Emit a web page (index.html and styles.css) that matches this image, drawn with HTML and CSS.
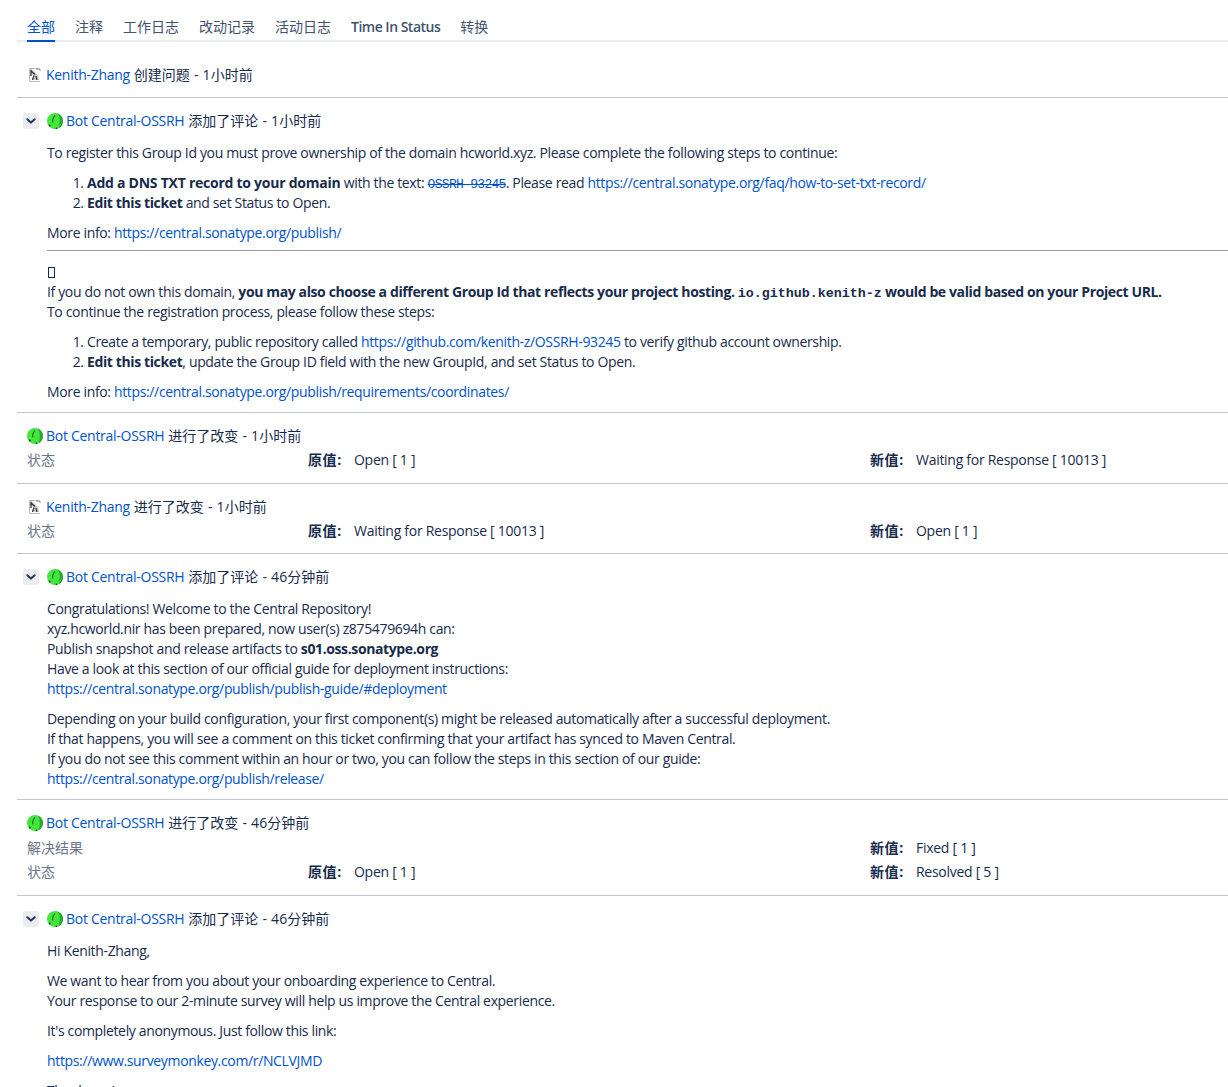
FILE: index.html
```
<!DOCTYPE html>
<html lang="zh">
<head>
<meta charset="utf-8">
<title>Activity</title>
<link rel="stylesheet" href="styles.css">
</head>
<body>
<svg class="defs" width="0" height="0" aria-hidden="true">
  <symbol id="bot" viewBox="0 0 16 16">
    <circle cx="8" cy="8" r="8" fill="#45e63c"/>
    <path d="M10.500 .4C13 3 13.600 9 11.600 15.200C14.500 13.900 16 11 16 8C16 4.500 13.800 1.500 10.500 .4Z" fill="#2aa834"/>
    <path d="M8 2.500C6 4.500 5.300 7 5.800 9.500" fill="none" stroke="#177a28" stroke-width="1.200"/>
    <circle cx="2.800" cy="12.600" r="1" fill="#14521c"/>
    <circle cx="9.500" cy="15.300" r=".9" fill="#14521c"/>
  </symbol>
  <symbol id="human" viewBox="0 0 12 14">
    <path d="M.5.5H10M.5.5V13.500H11" fill="none" stroke="#bdbdbd"/>
    <path d="M2 2H4L9 7L10 12H3L4.500 8L2 5Z" fill="#cfcfcf"/>
    <path d="M2 1.500V8M2 3L6 6.500M5 7.500L3.500 12M7 8L8 12" fill="none" stroke="#333" stroke-width="1.300"/>
    <path d="M7 1H11V3" fill="none" stroke="#8a8a8a"/>
  </symbol>
  <symbol id="chev" viewBox="0 0 16 16">
    <path d="M4.300 6.200L8 9.600L11.700 6.200" fill="none" stroke="#253858" stroke-width="2" stroke-linecap="round" stroke-linejoin="round"/>
  </symbol>
</svg>

<nav class="tabs">
  <a class="tab active">全部</a>
  <a class="tab">注释</a>
  <a class="tab">工作日志</a>
  <a class="tab">改动记录</a>
  <a class="tab">活动日志</a>
  <a class="tab strong">Time In Status</a>
  <a class="tab">转换</a>
</nav>

<section class="item first">
  <div class="head"><svg class="human"><use href="#human"/></svg><a>Kenith-Zhang</a><span class="cn">创建问题 - 1小时前</span></div>
</section>

<section class="item comment">
  <div class="head"><button class="toggle"><svg><use href="#chev"/></svg></button><svg class="bot"><use href="#bot"/></svg><a>Bot Central-OSSRH</a><span class="cn">添加了评论 - 1小时前</span></div>
  <div class="body">
    <p>To register this Group Id you must prove ownership of the domain hcworld.xyz. Please complete the following steps to continue:</p>
    <ol>
      <li><b class="dns">Add a DNS TXT record to your domain</b> with the text: <s class="mono">OSSRH-93245</s>. Please read <a>https://central.sonatype.org/faq/how-to-set-txt-record/</a></li>
      <li><b>Edit this ticket</b> and set Status to Open.</li>
    </ol>
    <p>More info: <a>https://central.sonatype.org/publish/</a></p>
    <hr>
    <p><span class="tofu"></span><br>If you do not own this domain, <b>you may also choose a different Group Id that reflects your project hosting. <code>io.github.kenith-z</code> would be valid based on your Project URL.</b><br>To continue the registration process, please follow these steps:</p>
    <ol>
      <li>Create a temporary, public repository called <a>https://github.com/kenith-z/OSSRH-93245</a> to verify github account ownership.</li>
      <li><b>Edit this ticket</b>, update the Group ID field with the new GroupId, and set Status to Open.</li>
    </ol>
    <p>More info: <a>https://central.sonatype.org/publish/requirements/coordinates/</a></p>
  </div>
</section>

<section class="item change">
  <div class="head"><svg class="bot"><use href="#bot"/></svg><a>Bot Central-OSSRH</a><span class="cn">进行了改变 - 1小时前</span></div>
  <div class="changes">
    <span class="field">状态</span><b>原值:</b><span>Open [ 1 ]</span><b>新值:</b><span>Waiting for Response [ 10013 ]</span>
  </div>
</section>

<section class="item change">
  <div class="head"><svg class="human"><use href="#human"/></svg><a>Kenith-Zhang</a><span class="cn">进行了改变 - 1小时前</span></div>
  <div class="changes">
    <span class="field">状态</span><b>原值:</b><span>Waiting for Response [ 10013 ]</span><b>新值:</b><span>Open [ 1 ]</span>
  </div>
</section>

<section class="item comment">
  <div class="head"><button class="toggle"><svg><use href="#chev"/></svg></button><svg class="bot"><use href="#bot"/></svg><a>Bot Central-OSSRH</a><span class="cn">添加了评论 - 46分钟前</span></div>
  <div class="body">
    <p>Congratulations! Welcome to the Central Repository!<br>xyz.hcworld.nir has been prepared, now user(s) z875479694h can:<br>Publish snapshot and release artifacts to <b>s01.oss.sonatype.org</b><br>Have a look at this section of our official guide for deployment instructions:<br><a>https://central.sonatype.org/publish/publish-guide/#deployment</a></p>
    <p>Depending on your build configuration, your first component(s) might be released automatically after a successful deployment.<br>If that happens, you will see a comment on this ticket confirming that your artifact has synced to Maven Central.<br>If you do not see this comment within an hour or two, you can follow the steps in this section of our guide:<br><a>https://central.sonatype.org/publish/release/</a></p>
  </div>
</section>

<section class="item change tall">
  <div class="head"><svg class="bot"><use href="#bot"/></svg><a>Bot Central-OSSRH</a><span class="cn">进行了改变 - 46分钟前</span></div>
  <div class="changes">
    <span class="field">解决结果</span><b class="skip">新值:</b><span>Fixed [ 1 ]</span>
    <span class="field">状态</span><b>原值:</b><span>Open [ 1 ]</span><b>新值:</b><span>Resolved [ 5 ]</span>
  </div>
</section>

<section class="item comment">
  <div class="head"><button class="toggle"><svg><use href="#chev"/></svg></button><svg class="bot"><use href="#bot"/></svg><a>Bot Central-OSSRH</a><span class="cn">添加了评论 - 46分钟前</span></div>
  <div class="body">
    <p>Hi Kenith-Zhang,</p>
    <p>We want to hear from you about your onboarding experience to Central.<br>Your response to our 2-minute survey will help us improve the Central experience.</p>
    <p>It's completely anonymous. Just follow this link:</p>
    <p><a>https://www.surveymonkey.com/r/NCLVJMD</a></p>
    <p>Thank you!</p>
  </div>
</section>
</body>
</html>
```
FILE: styles.css
```
html {
  height: 1087px;
  overflow: hidden;
}
body {
  margin: 0;
  padding: 0 0 0 17px;
  background: #fff;
  color: #172b4d;
  font: 14px/20px "Open Sans", "Noto Sans CJK SC", sans-serif;
  letter-spacing: -.28px;
}
.defs {
  position: absolute;
}
a {
  color: #0052cc;
}
.tabs {
  display: flex;
  gap: 20px;
  height: 26px;
  margin-top: 14px;
  padding-left: 10px;
  border-bottom: 2px solid #ebecf0;
}
.tab {
  height: 28px;
  box-sizing: border-box;
  color: #42526e;
  line-height: 26px;
  letter-spacing: 0;
}
.tab.strong {
  font-weight: 600;
  letter-spacing: -.5px;
}
.tab.active {
  color: #0052cc;
  border-bottom: 2px solid #0052cc;
}
.item {
  border-bottom: 1px solid #c1c7d0;
}
.head {
  display: flex;
  align-items: center;
  height: 20px;
  padding-left: 10px;
  white-space: pre;
}
.cn {
  margin-left: 4px;
  letter-spacing: 0;
  word-spacing: .5px;
}
.human {
  width: 12px;
  height: 14px;
  margin: 0 5px 0 2px;
}
.bot {
  width: 16px;
  height: 16px;
  margin-right: 3px;
}
.first {
  padding: 23px 0 12px;
}
.comment {
  padding: 13px 0 0;
}
.comment .head {
  padding-left: 6px;
}
.toggle {
  width: 16px;
  height: 16px;
  padding: 0;
  margin-right: 8px;
  border: 0;
  border-radius: 3px;
  background: #ebecf0;
}
.toggle svg {
  display: block;
  width: 16px;
  height: 16px;
}
.body {
  padding: 12px 0 0 30px;
  letter-spacing: -.35px;
}
.body b {
  letter-spacing: -.38px;
}
.body b.dns {
  letter-spacing: -.25px;
}
.body p {
  margin: 0 0 10px;
}
.body ol {
  margin: 0 0 10px;
  padding-left: 40px;
}
.body hr {
  height: 0;
  margin: -3px 0 11px;
  border: 0;
  border-top: 1px solid #999;
}
.mono {
  color: #0052cc;
  font: 13px/1 "Liberation Mono", monospace;
  letter-spacing: -.7px;
}
code {
  font: 700 13.33px/1 "Liberation Mono", monospace;
  letter-spacing: 0;
}
.tofu {
  display: inline-block;
  width: 5px;
  height: 9px;
  margin-left: 1px;
  border: 1px solid #172b4d;
  vertical-align: -1px;
}
.change {
  padding: 13px 0 12.25px;
}
.changes {
  display: grid;
  grid-template-columns: 281px 46px 516px 46px 1fr;
  row-gap: 4px;
  margin-top: 4.25px;
  padding-left: 10px;
}
.tall {
  padding-bottom: 13px;
}
.tall .changes {
  margin-top: 5px;
}
.field {
  color: #6b778c;
  letter-spacing: 0;
}
.skip {
  grid-column: 4;
}
.changes b {
  font-weight: 700;
  letter-spacing: .6px;
}
```
